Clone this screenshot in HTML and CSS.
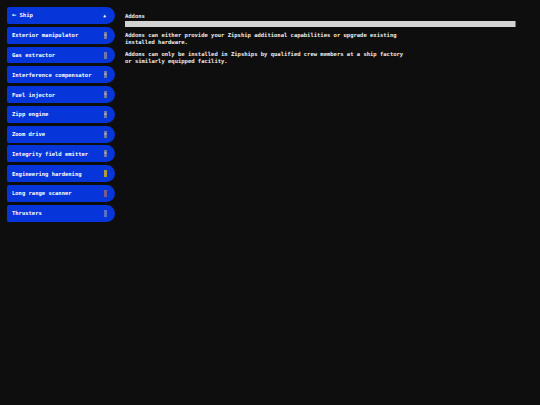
FILE: index.html
```html
<!DOCTYPE html>
<html>
<head>
<meta charset="utf-8">
<link rel="stylesheet" href="styles.css">
</head>
<body>
<div class="app">
  <nav class="sidebar">
    <div class="btn head"><span class="label"><span class="arrow">&#8592;</span> Ship</span><span class="caret">&#9650;</span></div>
    <div class="btn"><span class="label">Exterior manipulator</span><span class="badge g">x</span></div>
    <div class="btn"><span class="label">Gas extractor</span><span class="badge g">&nbsp;</span></div>
    <div class="btn"><span class="label">Interference compensator</span><span class="badge g">x</span></div>
    <div class="btn"><span class="label">Fuel injector</span><span class="badge g">x</span></div>
    <div class="btn"><span class="label">Zipp engine</span><span class="badge g">z</span></div>
    <div class="btn"><span class="label">Zoom drive</span><span class="badge g">z</span></div>
    <div class="btn"><span class="label">Integrity field emitter</span><span class="badge g">x</span></div>
    <div class="btn"><span class="label">Engineering hardening</span><span class="badge y">&nbsp;</span></div>
    <div class="btn"><span class="label">Long range scanner</span><span class="badge r">:</span></div>
    <div class="btn"><span class="label">Thrusters</span><span class="badge b">&nbsp;</span></div>
  </nav>
  <main class="panel">
    <div class="title">Addons</div>
    <div class="bar"></div>
    <p class="text">Addons can either provide your Zipship additional capabilities or upgrade existing<br>installed hardware.</p>
    <p class="text">Addons can only be installed in Zipships by qualified crew members at a ship factory<br>or similarly equipped facility.</p>
  </main>
</div>
</body>
</html>
```

FILE: styles.css
```css
html, body {
  margin: 0;
  padding: 0;
  background: #0e0e0e;
  width: 540px;
  height: 405px;
  overflow: hidden;
}
body {
  font-family: "DejaVu Sans Mono", "Liberation Mono", monospace;
  font-weight: bold;
  font-size: 5.5px;
  color: #f0f0f0;
}
.app {
  display: flex;
  gap: 10px;
}
.sidebar {
  display: flex;
  flex-direction: column;
  gap: 2.9px;
  padding: 7px 0 0 7px;
  width: 108px;
}
.btn {
  height: 16.9px;
  background: #0636da;
  border-radius: 2px 9px 9px 2px;
  display: flex;
  align-items: center;
  justify-content: space-between;
  padding: 0 8px 0 5px;
  color: #ffffff;
  white-space: nowrap;
}
.arrow {
  font-size: 7px;
  font-weight: bold;
}
.caret {
  font-size: 4.5px;
  margin-right: 1px;
}
.badge {
  width: 3.5px;
  height: 7px;
  font-size: 3.5px;
  line-height: 7px;
  text-align: center;
  overflow: hidden;
  color: #c8cbe0;
}
.badge.g { background: #6f78a8; }
.badge.y { background: #b09a3a; }
.badge.r { background: #7a5a90; color: #d04a5a; }
.badge.b { background: #5a70c8; }
.panel {
  flex: 1;
  padding: 13px 24px 0 0;
}
.title {
  line-height: 7px;
  height: 7px;
}
.bar {
  margin-top: 0.5px;
  height: 6px;
  background: #d2d2d2;
  border-right: 1px solid #777;
}
.text {
  margin: 5.5px 0 0 0;
  line-height: 6.8px;
}
.text + .text {
  margin-top: 5.5px;
}
```
